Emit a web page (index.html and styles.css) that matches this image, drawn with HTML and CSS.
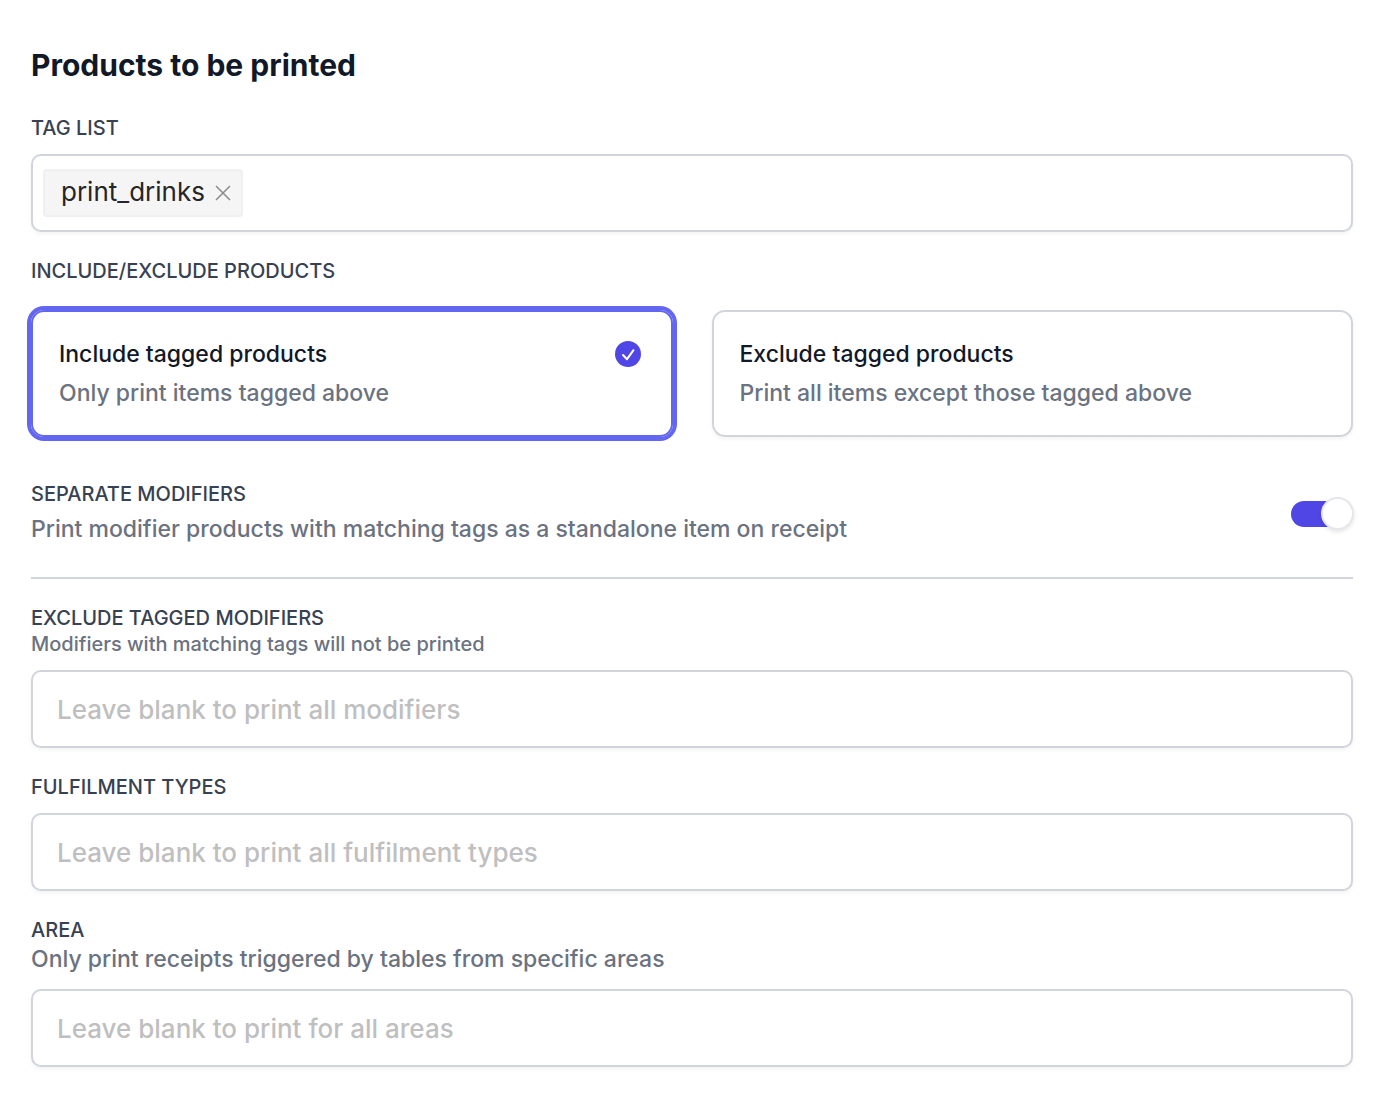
FILE: index.html
```html
<!DOCTYPE html>
<html lang="en">
<head>
  <meta charset="utf-8">
  <meta name="viewport" content="width=device-width, initial-scale=1">
  <title>Products to be printed</title>
  <link rel="stylesheet" href="styles.css">
</head>
<body>

  <form class="settings">
    <h1 class="title">Products to be printed</h1>

    <div class="field">
      <label class="label" for="tag-list">Tag list</label>
      <div class="control tag-control">
        <span class="tag">
          print_drinks
          <button type="button" class="tag-remove" aria-label="Remove print_drinks">
            <svg viewBox="0 0 16 16" width="16" height="16"><path d="M1 1l14 14M15 1L1 15"/></svg>
          </button>
        </span>
        <input type="text" id="tag-list" class="tag-input">
      </div>
    </div>

    <fieldset class="choices">
      <legend class="label">Include/exclude products</legend>
      <div class="cards">
        <label class="card">
          <input type="radio" name="mode" value="include" checked>
          <span class="card-text">
            <span class="card-title">Include tagged products</span>
            <span class="description">Only print items tagged above</span>
          </span>
          <svg class="check" viewBox="0 0 32 32" width="32" height="32">
            <circle cx="15" cy="16" r="13"/>
            <path d="M10 17l4 4.200l6.500-9"/>
          </svg>
        </label>
        <label class="card">
          <input type="radio" name="mode" value="exclude">
          <span class="card-text">
            <span class="card-title">Exclude tagged products</span>
            <span class="description">Print all items except those tagged above</span>
          </span>
          <svg class="check" viewBox="0 0 32 32" width="32" height="32">
            <circle cx="15" cy="16" r="13"/>
            <path d="M10 17l4 4.200l6.500-9"/>
          </svg>
        </label>
      </div>
    </fieldset>

    <div class="switch-row">
      <div class="switch-text">
        <label class="label" for="separate">Separate modifiers</label>
        <span class="description">Print modifier products with matching tags as a standalone item on receipt</span>
      </div>
      <input type="checkbox" role="switch" id="separate" class="switch" checked>
    </div>

    <div class="field">
      <label class="label" for="modifiers">Exclude tagged modifiers</label>
      <span class="hint">Modifiers with matching tags will not be printed</span>
      <input type="text" id="modifiers" class="control" placeholder="Leave blank to print all modifiers">
    </div>

    <div class="field">
      <label class="label" for="fulfilment">Fulfilment types</label>
      <input type="text" id="fulfilment" class="control" placeholder="Leave blank to print all fulfilment types">
    </div>

    <div class="field">
      <label class="label" for="area">Area</label>
      <span class="description">Only print receipts triggered by tables from specific areas</span>
      <input type="text" id="area" class="control" placeholder="Leave blank to print for all areas">
    </div>
  </form>

</body>
</html>
```
FILE: styles.css
```css
* {
  box-sizing: border-box;
}

body {
  margin: 0;
  padding: 46px 31px;
  background: #fff;
  color: #111827;
  font-family: Inter, "Liberation Sans", sans-serif;
  font-weight: 500;
}

input, button {
  font: inherit;
  color: inherit;
}

.title {
  margin: 0 0 30px;
  font-size: 30px;
  line-height: 39px;
  font-weight: 700;
}

.field {
  display: flex;
  flex-direction: column;
  margin-bottom: 26px;
}

.label {
  display: block;
  padding: 0;
  color: #374151;
  font-size: 20px;
  line-height: 26px;
  text-transform: uppercase;
}

.description, .hint {
  color: #6b7280;
}

.description {
  font-size: 23px;
  line-height: 33px;
}

.hint {
  font-size: 20px;
  line-height: 26px;
}

/* Text boxes */
.control {
  width: 100%;
  height: 78px;
  margin-top: 13px;
  padding: 0 24px;
  border: 2px solid #d1d5db;
  border-radius: 10px;
  background: #fff;
  font-size: 26px;
  box-shadow: 0 2px 4px rgba(0, 0, 0, 0.05);
}

.control::placeholder {
  color: #bfbfbf;
  opacity: 1;
}

.tag-control {
  display: flex;
  align-items: center;
  gap: 8px;
  padding: 0 10px;
}

.tag {
  display: flex;
  align-items: center;
  gap: 10px;
  height: 48px;
  padding: 0 10px 4px 16px;
  border: 2px solid #f0f0f0;
  border-radius: 4px;
  background: #f5f5f5;
  color: #262626;
  font-weight: 400;
}

.tag-remove {
  display: flex;
  padding: 4px 0 0;
  border: none;
  background: none;
}

.tag-remove svg {
  fill: none;
  stroke: #8c8c8c;
  stroke-width: 1.5;
}

.tag-input {
  flex: 1;
  min-width: 0;
  border: none;
  outline: none;
  background: none;
}

/* Include / exclude cards */
.choices {
  margin: 0 0 44px;
  padding: 0;
  border: none;
}

.cards {
  display: grid;
  grid-template-columns: 1fr 1fr;
  gap: 39px;
  margin-top: 26px;
}

.card {
  display: flex;
  align-items: flex-start;
  justify-content: space-between;
  padding: 26px;
  padding-bottom: 25px;
  border: 2px solid #d1d5db;
  border-radius: 13px;
  box-shadow: 0 2px 4px rgba(0, 0, 0, 0.05);
  cursor: pointer;
}

.card input {
  position: absolute;
  opacity: 0;
}

.card-text {
  display: flex;
  flex-direction: column;
  gap: 6px;
}

.card-title {
  font-size: 23px;
  line-height: 33px;
}

.check {
  fill: #4f46e5;
  visibility: hidden;
}

.check path {
  fill: none;
  stroke: #fff;
  stroke-width: 2;
  stroke-linecap: round;
  stroke-linejoin: round;
}

.card:has(input:checked) {
  border-color: #6366f1;
  box-shadow: 0 0 0 4px #6366f1;
}

.card:has(input:checked) .check {
  visibility: visible;
}

/* Separate modifiers */
.switch-row {
  display: flex;
  align-items: center;
  justify-content: space-between;
  margin-bottom: 26px;
  padding-bottom: 31px;
  border-bottom: 2px solid #d1d5db;
}

.switch-text {
  display: flex;
  flex-direction: column;
  gap: 6px;
}

/* The knob is taller than the track and sticks out at its end */
.switch {
  appearance: none;
  display: flex;
  align-items: center;
  justify-content: flex-end;
  flex-shrink: 0;
  width: 62px;
  height: 26px;
  margin: 0;
  border-radius: 13px;
  background: #4f46e5;
  cursor: pointer;
}

.switch::before {
  content: "";
  box-sizing: border-box;
  width: 33px;
  height: 33px;
  flex-shrink: 0;
  margin: 0 -1px;
  border: 2px solid #e5e7eb;
  border-radius: 50%;
  background: #fff;
  box-shadow: 0 2px 4px rgba(0, 0, 0, 0.1);
}

.switch:not(:checked) {
  justify-content: flex-start;
  background: #e5e7eb;
}
```
